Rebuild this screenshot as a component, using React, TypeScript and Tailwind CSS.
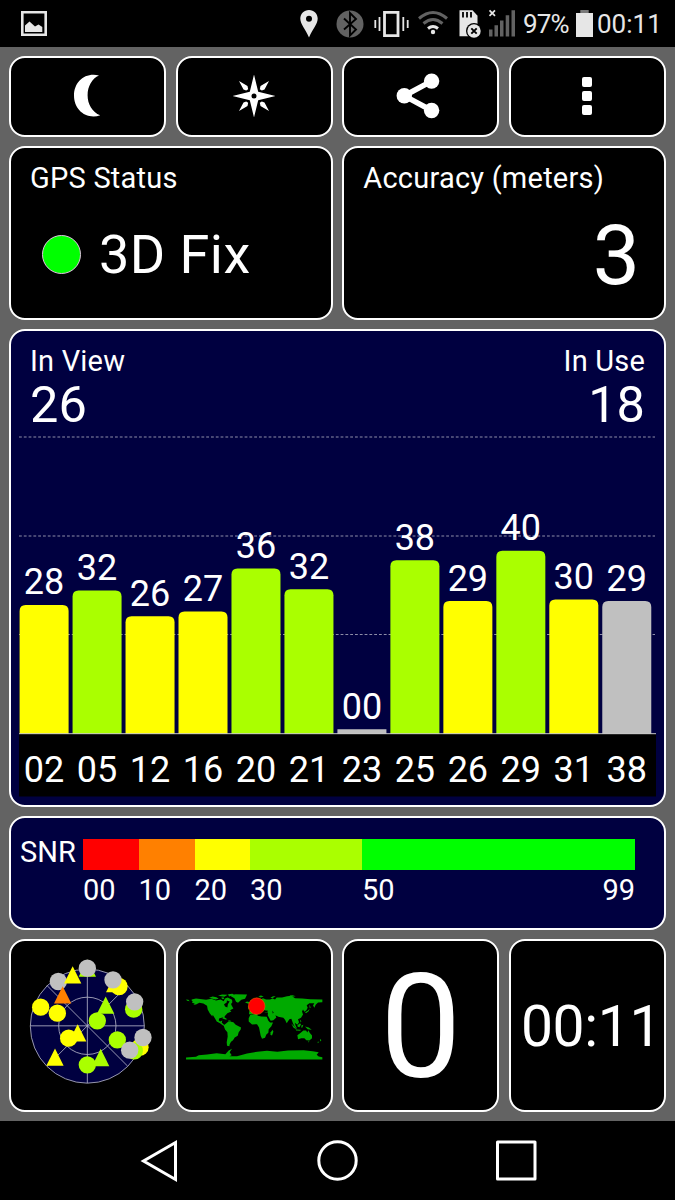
import React from "react"

type Satellite = { id: string; snr: string; top: number; color: string }

const GREEN = "#aaff00"
const YELLOW = "#ffff00"
const GRAY = "#c0c0c0"

// top is the y of the bar's upper edge inside the chart
const satellites: Satellite[] = [
  { id: "02", snr: "28", top: 174.9, color: YELLOW },
  { id: "05", snr: "32", top: 160.5, color: GREEN },
  { id: "12", snr: "26", top: 186.3, color: YELLOW },
  { id: "16", snr: "27", top: 181.6, color: YELLOW },
  { id: "20", snr: "36", top: 138.5, color: GREEN },
  { id: "21", snr: "32", top: 159.2, color: GREEN },
  { id: "23", snr: "00", top: 299.2, color: GRAY },
  { id: "25", snr: "38", top: 130.2, color: GREEN },
  { id: "26", snr: "29", top: 171, color: YELLOW },
  { id: "29", snr: "40", top: 120.8, color: GREEN },
  { id: "31", snr: "30", top: 169.5, color: YELLOW },
  { id: "38", snr: "29", top: 171, color: GRAY },
]

const Panel: React.FC<{ className?: string; children: React.ReactNode }> = ({ className = "bg-black", children }) => (
  <div className={`min-w-0 overflow-hidden rounded-[16px] border-2 border-white ${className}`}>{children}</div>
)

const StatusBar: React.FC = () => (
  <div className="flex h-[47px] items-center bg-black text-[#e6e6e6]">
    <svg className="ml-[21px] h-[25px] w-[26px]" viewBox="0 0 26 25">
      <path d="M1.3 1.3h23.4v22.4H1.3z" fill="none" stroke="#e6e6e6" strokeWidth="2.6" />
      <path d="M4 21v-6.5l4.5-4 5.500 5 3.500-2 3.800 2.500v5z" fill="#e6e6e6" />
    </svg>
    <svg className="ml-auto h-[47px] w-[226px]" viewBox="290 0 226 47">
      <path
        d="M309 10c-5 0-8.700 3.900-8.700 8.600 0 5.800 5.200 10.200 8.700 19 3.500-8.800 8.700-13.200 8.700-19 0-4.700-3.700-8.600-8.700-8.600zm0 5.700a3 3 0 1 1 0 6 3 3 0 0 1 0-6z"
        fill="#e6e6e6"
        fillRule="evenodd"
      />
      <circle cx="350" cy="24" r="13.500" fill="#626262" />
      <path d="M344 18.500l12 11-6 6V13l6 6-12 10.500" fill="none" stroke="#000" strokeWidth="1.900" />
      <g fill="none" stroke="#e6e6e6">
        <path d="M384.500 12.300h13.500v23.400h-13.500z" strokeWidth="2.800" />
        <path d="M379.500 17v14M403.300 17v14M375.300 20v8M407.700 20v8" strokeWidth="1.800" />
      </g>
      <g fill="none" strokeWidth="3">
        <path d="M419 18.500q14-12 28 0" stroke="#626262" />
        <path d="M423.500 23.500q9.500-8 19 0" stroke="#626262" />
        <path d="M428 28.500q5-4 10 0" stroke="#e6e6e6" />
      </g>
      <circle cx="433" cy="32" r="2.200" fill="#e6e6e6" />
      <path d="M459.500 10.300h13l5 5.500v20.500h-18z" fill="#e6e6e6" />
      <path d="M463 12v5.500M467 12v5.500M471 12v5.500" stroke="#000" strokeWidth="1.800" />
      <circle cx="474" cy="31" r="8" fill="#000" />
      <circle cx="474" cy="31" r="6.700" fill="#e6e6e6" />
      <path d="M471.300 28.300l5.400 5.400M476.700 28.300l-5.400 5.400" stroke="#000" strokeWidth="1.900" />
      <path d="M489.500 10.300l5.500 5.500M495 10.300l-5.500 5.500" stroke="#e6e6e6" strokeWidth="1.700" />
      <path
        d="M489 29.500h3.500v7H489zM494.500 25.300h3.500v11.200h-3.500zM500 20.500h3.500v16H500zM505.700 15.300h3.500v21.200h-3.500zM511.500 10.300h3.500v26.200h-3.500z"
        fill="#626262"
      />
    </svg>
    <span className="ml-[7px] w-[45px] text-[26px] leading-none tracking-[-0.900px]">97%</span>
    <svg className="ml-[8px] h-[27px] w-[17px]" viewBox="0 0 17 27">
      <path d="M4.300 0h8.400v4H4.300z" fill="#7a7a7a" />
      <path d="M0 3h17v24H0z" fill="#e6e6e6" />
    </svg>
    <span className="ml-[4px] mr-[14px] w-[64px] whitespace-nowrap pt-[1px] text-[26px] leading-none">00:11</span>
  </div>
)

const Toolbar: React.FC = () => (
  <div className="grid h-[80.5px] grid-cols-4 gap-[9.5px]">
    <Panel className="flex items-center justify-center bg-black">
      <svg className="h-[44px] w-[44px]" viewBox="0 0 44 44">
        <path
          d="M33 1.500Q30 .8 27.500.8C16 .8 8 10 8 21.600S16 42.500 27.500 42.500Q31 42.500 34.200 41.300C26 38 21.600 30 21.600 21.200S26 4.500 33 1.500z"
          fill="#fff"
        />
      </svg>
    </Panel>
    <Panel className="flex items-center justify-center bg-black">
      <svg className="h-[44px] w-[44px]" viewBox="0 0 44 44">
        <path
          d="M22 .5l4.200 17.300L43.500 22l-17.300 4.200L22 43.500l-4.200-17.300L.5 22l17.300-4.200zM22 19.500a2.500 2.500 0 1 0 0 5 2.500 2.500 0 0 0 0-5z"
          fill="#fff"
          fillRule="evenodd"
        />
        <path
          d="M7 7l8.500 5 .7 3.300-2 1.200-2.700-1zM37 7l-8.500 5-.7 3.300 2 1.200 2.700-1zM7 37l8.500-5 .7-3.300-2-1.200-2.700 1zM37 37l-8.500-5-.7-3.300 2-1.200 2.700 1z"
          fill="#fff"
        />
      </svg>
    </Panel>
    <Panel className="flex items-center justify-center bg-black">
      <svg className="h-[46px] w-[50px]" viewBox="0 0 50 46">
        <path d="M35.600 8.100L8.300 22.800l27.300 14.700" fill="none" stroke="#fff" strokeWidth="5.500" />
        <circle cx="35.600" cy="8.100" r="7.700" fill="#fff" />
        <circle cx="8.300" cy="22.800" r="7.700" fill="#fff" />
        <circle cx="35.600" cy="37.500" r="7.700" fill="#fff" />
      </svg>
    </Panel>
    <Panel className="flex flex-col items-center justify-center gap-[4px] bg-black">
      <i className="size-[10px] rounded-[2px] bg-white" />
      <i className="size-[10px] rounded-[2px] bg-white" />
      <i className="size-[10px] rounded-[2px] bg-white" />
    </Panel>
  </div>
)

const SignalChart: React.FC = () => (
  <svg className="mx-auto h-[370px] w-[637px]" viewBox="19 0 637 370">
    {[7, 106, 204.5].map((y) => (
      <path key={y} d={`M19 ${y}H655`} stroke="#8e8ea8" strokeWidth="1.100" strokeDasharray="2.800 2" />
    ))}
    <rect x="19" y="304" width="637" height="62.500" fill="#000" />
    {satellites.map((sat, i) => {
      const x = 19.6 + i * 52.97
      const r = sat.snr === "00" ? 0 : 6
      return (
        <g key={sat.id} fontSize="36" textAnchor="middle" fill="#fff">
          <path
            d={`M${x} 304V${sat.top + r}q0 ${-r} ${r} ${-r}h${49 - 2 * r}q${r} 0 ${r} ${r}V304z`}
            fill={sat.color}
          />
          <text x={x + 24.5} y={sat.top - 10.5}>{sat.snr}</text>
          <text x={x + 24.5} y="352">{sat.id}</text>
        </g>
      )
    })}
    <path d="M19 303.700H656" stroke="#c8c8c8" strokeWidth="1" />
  </svg>
)

const SnrLegend: React.FC = () => (
  <Panel className="flex h-[113.5px] bg-[#000040] text-[29px] leading-none">
    <span className="ml-[9px] mt-[20px] w-[63px]">SNR</span>
    <div className="mt-[21px] w-[552px]">
      <div className="flex h-[31px]">
        <div className="w-[55.5px] bg-[#ff0000]" />
        <div className="w-[56px] bg-[#ff8000]" />
        <div className="w-[55.5px] bg-[#ffff00]" />
        <div className="w-[111.5px] bg-[#aaff00]" />
        <div className="flex-1 bg-[#00ff00]" />
      </div>
      <div className="mt-[6px] flex">
        <span className="w-[55.5px]">00</span>
        <span className="w-[56px]">10</span>
        <span className="w-[55.5px]">20</span>
        <span className="w-[112px]">30</span>
        <span className="flex-1">50</span>
        <span>99</span>
      </div>
    </div>
  </Panel>
)

type Marker = ["c" | "t", number, number, string]

// circles and triangles, painted in this order
const sky: Marker[] = [
  ["c", 175, 153, GRAY],
  ["t", 188, 194, "#ff8000"],
  ["t", 218, 134, YELLOW],
  ["t", 262, 114, GREEN],
  ["c", 262, 113, GRAY],
  ["t", 344, 160, YELLOW],
  ["c", 357, 168, YELLOW],
  ["c", 339, 148, GRAY],
  ["c", 401, 236, GREEN],
  ["c", 404, 214, GRAY],
  ["c", 122, 230, YELLOW],
  ["c", 172, 248, YELLOW],
  ["t", 317, 225, GREEN],
  ["c", 292, 271, GREEN],
  ["t", 233, 308, YELLOW],
  ["c", 206, 323, YELLOW],
  ["c", 352, 328, GREEN],
  ["c", 420, 350, YELLOW],
  ["c", 403, 361, GREEN],
  ["c", 429, 321, GRAY],
  ["c", 389, 359, GRAY],
  ["t", 165, 381, YELLOW],
  ["c", 262, 403, GREEN],
  ["t", 302, 382, GREEN],
]

const SkyPlot: React.FC = () => (
  <svg className="h-full w-full" viewBox="33 31.500 459.400 508.500">
    <g fill="none" stroke="#b4b4c8" strokeWidth="2.500">
      <circle cx="262" cy="287" r="171" fill="#000040" />
      <circle cx="262" cy="286" r="86" />
      <path d="M91 286h342M262 116v342M141 165l242 242M141 407l242-242" />
    </g>
    {sky.map(([shape, x, y, color]) =>
      shape === "c" ? (
        <circle key={`${x}-${y}`} cx={x} cy={y} r="26" fill={color} />
      ) : (
        <path key={`${x}-${y}`} d={`M${x} ${y - 27}l26 52h-52z`} fill={color} />
      ),
    )}
  </svg>
)

const WorldMap: React.FC = () => (
  <svg className="h-full w-full" viewBox="7.900 -88.500 459.400 508.500">
    <g fill="#00aa00">
      {/* americas */}
      <path d="M49 87L62 84L92 88L108 85L122 90L136 87L145 92L149 84L155 88L154 96L146 101L149 108L156 111L158 99L165 96L169 105L174 114L164 119L168 123L156 128L148 137L147 144L142 141L132 143L130 149L134 153L141 150L139 156L146 163L153 164L150 167L143 165L134 158L124 153L119 144L112 133L111 138L103 128L97 117L95 106L84 99L72 97L62 102L54 103L58 99L50 97L52 92L49 91z" />
      <path d="M101 82l11-4 11 2 7 5-10 2zM128 76l12-4 17 1-10 6zM137 82l7-2 3 5-5 1zM149 84l8-3 13 7 1 7-5 7-6-5 3-4-8-3zM32 87l7 1 4 4-8-1zM158 71l13-1 5 2-15 6z" />
      <path d="M163 75L180 71L215 72L212 79L209 85L198 88L188 97L182 94L177 83z" />
      <path d="M153 158L160 152L174 155L181 163L197 171L196 177L190 185L187 196L178 201L173 209L167 214L163 221L162 227L155 226L154 215L157 198L156 185L149 177L145 166L149 161z" />
      <path d="M140 143l8-2 8 5-6 1zM158 149l7 1 2 3-6-1zM209 96l6-3 9 2-5 5z" />
      {/* europe and asia */}
      <path d="M221 131L222 121L231 119L228 113L238 108L246 98L253 88L263 83L272 87L284 87L292 84L299 87L304 81L320 81L335 77L348 76L359 83L380 84L405 86L441 87L441 95L428 96L421 103L417 112L413 105L417 98L402 98L394 104L397 112L393 119L387 124L383 117L380 123L383 132L377 142L368 146L371 155L366 163L358 157L361 166L366 176L358 169L353 159L348 145L342 146L334 158L329 148L324 142L309 139L300 134L303 141L294 149L286 151L277 134L278 126L268 126L268 120L258 123L251 118L254 127L243 120L236 125L231 131z" />
      <path d="M219 116l-1-7 4-3 1 7zM249 77l8-2 8 3-9 3zM285 82l8-5 8 0-10 6zM342 75l10-1 9 3-12 2zM402 102l4 9-3 2zM403 115l-3 7-8 6-3-3 8-4z" />
      {/* africa */}
      <path d="M225 133L245 130L247 136L258 138L274 139L279 151L284 156L293 156L288 167L280 176L279 187L273 192L269 202L260 205L256 196L254 186L251 171L245 161L230 162L220 153L220 143z" />
      <path d="M292 178l2 6-4 11-5-2 1-8z" />
      {/* oceania */}
      <path d="M366 194L376 187L384 180L392 180L396 186L399 179L403 187L410 195L410 203L402 210L393 209L387 203L378 203L368 206z" />
      <path d="M348 159l12 12 3 6-9-6zM361 177l15 1-1 3-13-1zM366 164l8-6 3 4-5 8-5-1zM378 165l6-2-3 8-3 1zM389 168l11 3 9 7-12-2zM373 146l5 6-2 4zM398 212l4 1-2 3zM434 205l4 4-4 4zM427 214l5 0-5 4z" />
      {/* antarctica */}
      <path d="M32 261L62 259L70 254L95 252L124 248L150 251L160 240L170 235L163 245L169 254L162 257L185 257L215 249L246 244L275 241L306 244L338 240L385 239L412 242L430 245L424 253L430 258L441 260V267H32z" />
    </g>
    <path d="M266 119l12 2-3 4-11 1zM291 120l4 7-3 2z" fill="#000" />
    <circle cx="244" cy="107" r="25" fill="#ff0000" stroke="#d08000" strokeWidth="1.500" />
  </svg>
)

const App: React.FC = () => {
  return (
    <div className="h-[1200px] w-[675px] overflow-hidden bg-[#636363] font-[Roboto,sans-serif] text-white">
      <StatusBar />
      <main className="flex h-[1074px] flex-col gap-[9px] px-[9px] pt-[9px]">
        <Toolbar />
        <div className="grid h-[174px] grid-cols-2 gap-[9.5px]">
          <Panel>
            <h2 className="ml-[19px] mt-[16px] text-[29px] leading-none tracking-[0.23px]">GPS Status</h2>
            <div className="mt-[34px] flex items-center">
              <i className="ml-[31px] mr-[18px] size-[39px] rounded-full border border-[#e0c0e0] bg-[#00ff00]" />
              <span className="pt-[1px] text-[54px] leading-none tracking-[0.45px]">3D Fix</span>
            </div>
          </Panel>
          <Panel>
            <h2 className="ml-[19px] mt-[16px] text-[29px] leading-none tracking-[0.23px]">Accuracy (meters)</h2>
            <p className="mr-[24px] mt-[21px] text-right text-[84px] leading-none">3</p>
          </Panel>
        </div>
        <Panel className="h-[478.5px] bg-[#000040]">
          <div className="flex h-[99.5px] justify-between px-[19px] pt-[16px]">
            <div>
              <h2 className="text-[29px] leading-none tracking-[0.2px]">In View</h2>
              <p className="text-[50.5px] leading-[58px]">26</p>
            </div>
            <div className="text-right">
              <h2 className="text-[29px] leading-none tracking-[0.2px]">In Use</h2>
              <p className="text-[50.5px] leading-[58px]">18</p>
            </div>
          </div>
          <SignalChart />
        </Panel>
        <SnrLegend />
        <div className="grid h-[173.5px] grid-cols-4 gap-[9.5px]">
          <Panel>
            <SkyPlot />
          </Panel>
          <Panel>
            <WorldMap />
          </Panel>
          <Panel className="flex items-center justify-center bg-black">
            <span className="pt-[5px] text-[145px] leading-none">0</span>
          </Panel>
          <Panel className="flex items-center bg-black">
            <span className="ml-[10px] whitespace-nowrap pt-[2px] text-[57px] leading-none tracking-[-0.3px]">00:11</span>
          </Panel>
        </div>
      </main>
      <nav className="flex h-[79px] items-center justify-center bg-black">
        <svg className="h-[79px] w-[400px]" viewBox="138 0 400 79" fill="none" stroke="#fff" strokeWidth="3">
          <path d="M175.500 21.500v37L143.500 40z" />
          <circle cx="337.500" cy="39.500" r="18.700" />
          <path d="M497.500 21h37.500v37h-37.500z" strokeLinejoin="round" />
        </svg>
      </nav>
    </div>
  )
}

export default App
